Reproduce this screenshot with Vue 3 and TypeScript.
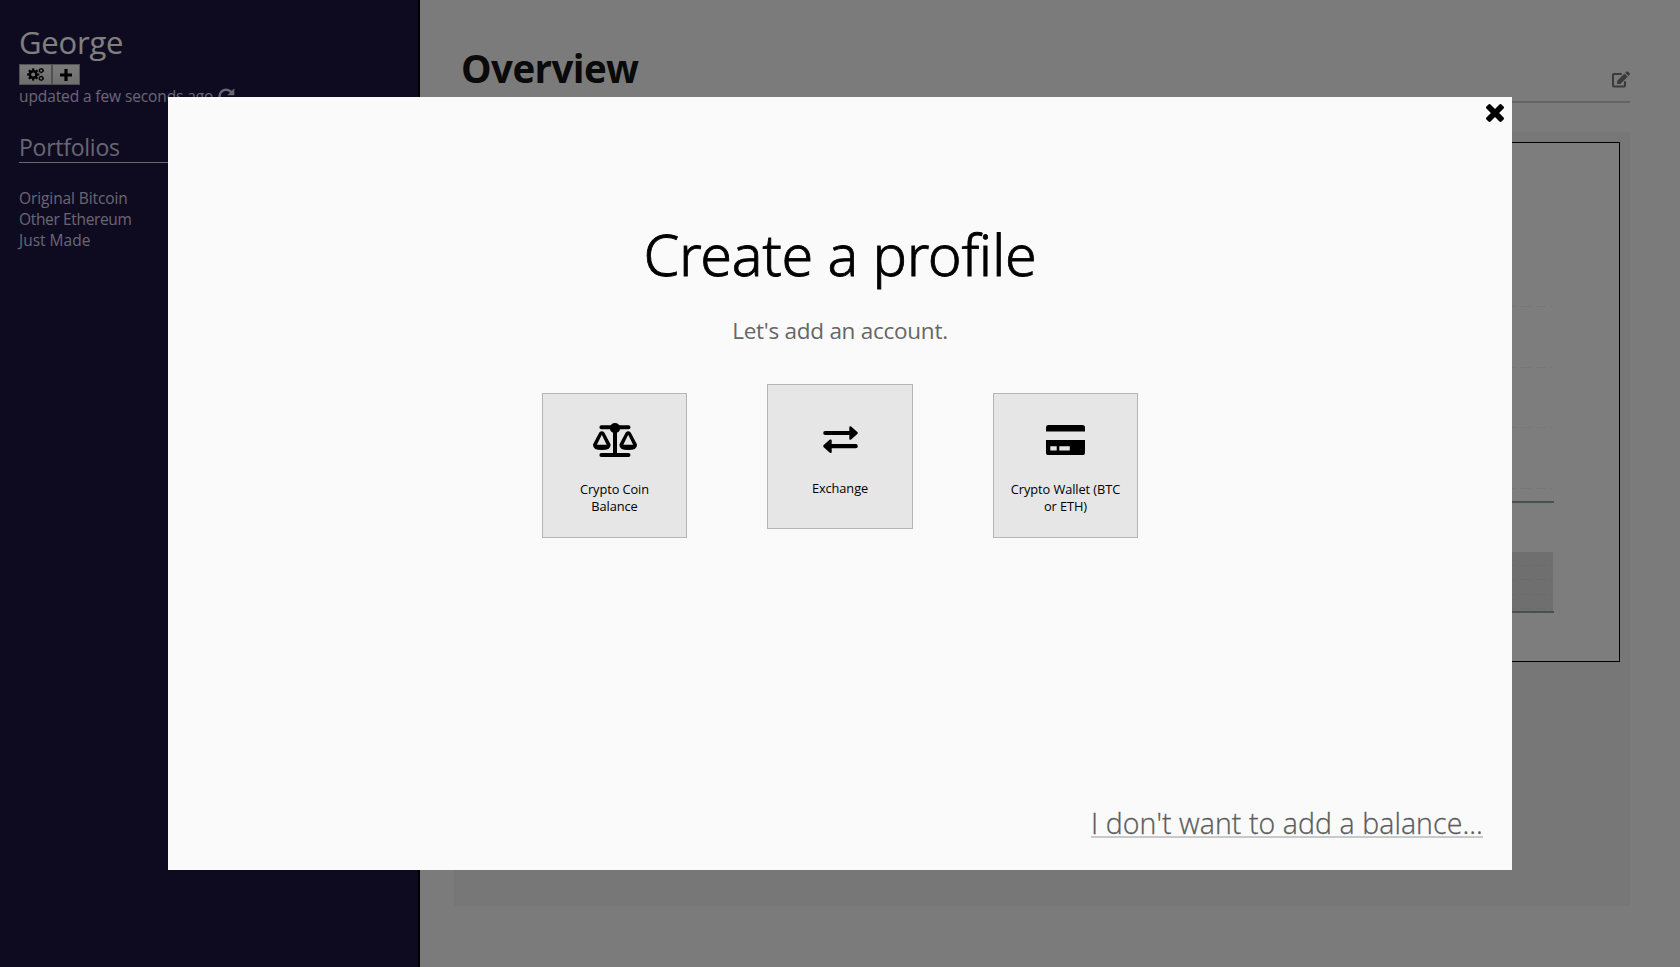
<script setup lang="ts">
type AccountKind = 'balance' | 'exchange' | 'wallet'

const portfolios: string[] = ['Original Bitcoin', 'Other Ethereum', 'Just Made']
const accounts: { kind: AccountKind; label: string }[] = [
  { kind: 'balance', label: 'Crypto Coin Balance' },
  { kind: 'exchange', label: 'Exchange' },
  { kind: 'wallet', label: 'Crypto Wallet (BTC or ETH)' },
]
const gridLines: number[] = [306.5, 367.5, 427.5, 488.5]
const brushLines: number[] = [565.5, 579.5, 594.5, 608.5]
const bigTeeth: number[] = [0, 45, 90, 135, 180, 225, 270, 315]
</script>

<template>
  <div class="app">
    <aside class="sidebar">
      <h2 class="user">George</h2>
      <div class="buttons">
        <button class="btn settings" aria-label="Settings">
          <svg width="17" height="13" viewBox="0 0 17 13">
            <g fill="none" stroke="#000">
              <circle cx="6.2" cy="6.5" r="3.3" stroke-width="2.5" />
              <path v-for="a in bigTeeth" :key="a" d="M6.2 .4v2" stroke-width="2.2" :transform="`rotate(${a} 6.2 6.5)`" />
              <circle cx="14.2" cy="2.6" r="1.8" stroke-width="1.3" />
              <circle cx="14.2" cy="2.6" r="2.4" stroke-width=".8" stroke-dasharray="1.2 1.3" />
              <circle cx="14.2" cy="10.4" r="1.8" stroke-width="1.3" />
              <circle cx="14.2" cy="10.4" r="2.4" stroke-width=".8" stroke-dasharray="1.2 1.3" />
            </g>
          </svg>
        </button>
        <button class="btn add" aria-label="Add">
          <svg width="12" height="12" viewBox="0 0 12 12">
            <path d="M6 1.6v8.8M1.6 6h8.8" stroke="#000" stroke-width="3.2" stroke-linecap="square" fill="none" />
          </svg>
        </button>
      </div>
      <div class="updated">
        <span>updated a few seconds ago</span>
        <svg width="17" height="17" viewBox="0 0 17 17">
          <path d="M14.1 5.2A6.7 6.7 0 1 0 14.4 11" fill="none" stroke="currentColor" stroke-width="2.4" />
          <path d="M16.3 .3v7H9.3z" fill="currentColor" />
        </svg>
      </div>
      <h3 class="section">Portfolios</h3>
      <ul class="list">
        <li v-for="name in portfolios" :key="name">{{ name }}</li>
      </ul>
    </aside>

    <main class="main">
      <header class="header">
        <h1>Overview</h1>
        <svg class="edit" width="18" height="17" viewBox="0 0 18 17">
          <path d="M9.8 3H1.9Q1 3 1 3.9V14.6Q1 15.5 1.9 15.5H12.1Q13 15.5 13 14.6V10.2" fill="none" stroke="currentColor" stroke-width="2" />
          <path d="M5.2 9.8 12.5 2.5 15.7 5.7 8.4 13H5.2z" fill="currentColor" />
          <path d="M13.3 1.7 14.6.4Q15.2-.1 15.8.4L17.7 2.3Q18.2 2.9 17.7 3.5L16.5 4.9z" fill="currentColor" />
        </svg>
      </header>
      <section class="panel">
        <div class="chart">
          <svg width="1154" height="518" viewBox="465 143 1154 518">
            <rect x="530" y="552" width="1023" height="60" fill="#dedede" />
            <g stroke="#ededed" stroke-dasharray="10 5">
              <path v-for="y in gridLines" :key="y" :d="`M531 ${y}H1553`" />
            </g>
            <g stroke="#d6d6d6" stroke-dasharray="10 5">
              <path v-for="y in brushLines" :key="y" :d="`M531 ${y}H1553`" />
            </g>
            <path d="M530 502H1554M530 612H1554" stroke="#8ea6a6" stroke-width="2" />
          </svg>
        </div>
      </section>
    </main>

    <div class="overlay">
      <div class="modal" role="dialog">
        <button class="close" aria-label="Close">
          <svg width="18" height="18" viewBox="302 366 1188 1188">
            <path d="M1490 1322q0 40-28 68l-136 136q-28 28-68 28t-68-28l-294-294-294 294q-28 28-68 28t-68-28l-136-136q-28-28-28-68t28-68l294-294-294-294q-28-28-28-68t28-68l136-136q28-28 68-28t68 28l294 294 294-294q28-28 68-28t68 28l136 136q28 28 28 68t-28 68l-294 294 294 294q28 28 28 68z" />
          </svg>
        </button>
        <h1 class="title">Create a profile</h1>
        <p class="subtitle">Let's add an account.</p>
        <div class="cards">
          <button v-for="account in accounts" :key="account.kind" class="card" :class="account.kind">
            <span class="icon">
              <svg v-if="account.kind === 'balance'" width="44" height="34" viewBox="0 0 44 34">
                <g fill="none" stroke="#000" stroke-width="4" stroke-linecap="round">
                  <path d="M8.4 4.2H35.5M8.4 31.9H35.5" />
                  <path d="M22 4V31" stroke-linecap="butt" />
                </g>
                <circle cx="22" cy="5.2" r="5.1" />
                <path d="M6.3 9.6Q8.8 6.9 11.3 9.6L17.5 21.3Q18.3 27 8.8 27T.1 21.3zM8.8 11.8 3.9 21.7H13.7z" fill-rule="evenodd" />
                <path d="M32.7 9.6Q35.2 6.9 37.7 9.6L43.9 21.3Q44.7 27 35.2 27T26.5 21.3zM35.2 11.8 30.3 21.7H40.1z" fill-rule="evenodd" />
              </svg>
              <svg v-else-if="account.kind === 'exchange'" class="arrows" width="35" height="28" viewBox="0 0 35 28">
                <path d="M2.3 7H27M32.7 20.2H8" stroke="#000" stroke-width="4.2" stroke-linecap="round" />
                <path d="M26.3 1.3Q26.3-.3 28.1.4L34.3 5.9Q35.3 7 34.3 8.1L28.1 13.6Q26.3 14.3 26.3 12.7zM8.7 14.5Q8.7 12.9 6.9 13.6L.7 19.1Q-.3 20.2.7 21.3L6.9 26.8Q8.7 27.5 8.7 25.9z" />
              </svg>
              <svg v-else width="39" height="30" viewBox="0 0 39 30">
                <path d="M0 6.5V2.6Q0 0 2.6 0H36.4Q39 0 39 2.6V6.5zM0 15H39V27.4Q39 30 36.4 30H2.6Q0 30 0 27.4zM4.3 21.2V25.6H10.7V21.2zM13.3 21.2V25.6H23.8V21.2z" fill-rule="evenodd" />
              </svg>
            </span>
            <span class="label">{{ account.label }}</span>
          </button>
        </div>
        <a class="skip">I don't want to add a balance...</a>
      </div>
    </div>
  </div>
</template>

<style>
body {
  margin: 0;
  overflow: hidden;
}
</style>

<style scoped>
.app {
  display: flex;
  position: relative;
  width: 100%;
  height: 967px;
  overflow: hidden;
  background: #f6f6f6;
  font-family: "Open Sans", "Noto Sans", sans-serif;
}
h1, h2, h3, p, ul {
  margin: 0;
  padding: 0;
  font-weight: 400;
}
button {
  font: inherit;
  margin: 0;
  padding: 0;
  color: #000;
}
svg {
  display: block;
  flex: none;
}
.sidebar {
  box-sizing: border-box;
  width: 420px;
  flex: none;
  padding: 22px 19px 0;
  border-right: 2px solid #000;
  background: #1d1541;
  color: #d3cce2;
  font-size: 15.5px;
}
.user {
  color: #fff;
  font-size: 31px;
  line-height: 40px;
  letter-spacing: -0.2px;
}
.buttons {
  display: flex;
  margin-top: 2px;
}
.btn {
  box-sizing: border-box;
  height: 21px;
  display: flex;
  align-items: center;
  justify-content: center;
  border: 1px solid #a2a2a2;
  border-radius: 0;
  background: linear-gradient(#f7f7f7, #dddddd);
}
.settings { width: 33px; }
.add { width: 28px; }
.updated {
  display: flex;
  height: 21px;
  line-height: 23px;
  letter-spacing: -0.11px;
  white-space: nowrap;
}
.updated svg {
  margin: 3px 0 0 5px;
}
.section {
  box-sizing: border-box;
  height: 32px;
  margin-top: 25px;
  border-bottom: 1px solid #d3cce2;
  font-size: 23px;
  line-height: 33px;
  letter-spacing: -0.26px;
}
.list {
  margin-top: 25px;
  list-style: none;
  line-height: 21px;
  letter-spacing: -0.1px;
}
.list li:nth-child(2) { letter-spacing: -0.35px; }
.list li:nth-child(3) { letter-spacing: 0; }
.main {
  flex: 1;
  padding: 41px 50px 0 34px;
}
.header {
  display: flex;
  justify-content: space-between;
  height: 60px;
  padding-left: 7px;
  border-bottom: 2px solid #c8c8c8;
}
.header h1 {
  font-size: 38.5px;
  font-weight: 700;
  line-height: 54px;
  letter-spacing: -0.58px;
  color: #141414;
}
.edit {
  margin-top: 30px;
  color: #757575;
}
.panel {
  box-sizing: border-box;
  height: 774px;
  margin-top: 29px;
  padding: 10px;
  background: #efefef;
}
.chart {
  border: 1px solid #000;
  background: #fafafa;
}
.overlay {
  position: absolute;
  inset: 0;
  display: flex;
  align-items: center;
  justify-content: center;
  background: rgba(0, 0, 0, 0.5);
}
.modal {
  position: relative;
  box-sizing: border-box;
  width: 1344px;
  height: 773px;
  padding: 117px 29px 32px;
  display: flex;
  flex-direction: column;
  align-items: center;
  background: #fafafa;
}
.close {
  position: absolute;
  top: 7px;
  right: 8px;
  border: 0;
  background: none;
}
.title {
  font-family: "Noto Sans", sans-serif;
  font-size: 57.5px;
  font-weight: 300;
  line-height: 80px;
  letter-spacing: -0.33px;
  -webkit-text-stroke: 0.8px #000;
}
.subtitle {
  margin-top: 21px;
  font-size: 22.5px;
  line-height: 32px;
  letter-spacing: -0.26px;
  color: #666;
}
.cards {
  display: grid;
  grid-template-columns: 145px 146px 145px;
  gap: 80px;
  margin-top: 37px;
}
.card {
  box-sizing: border-box;
  height: 145px;
  margin-top: 9px;
  padding: 29px 14px 0;
  display: flex;
  flex-direction: column;
  align-items: center;
  border: 1px solid #b5b5b5;
  background: #e6e6e6;
}
.card.exchange {
  margin-top: 0;
  padding-top: 37px;
}
.arrows {
  margin-top: 2px;
}
.icon {
  height: 34px;
  display: flex;
  align-items: center;
}
.label {
  margin-top: 24px;
  font-size: 12.8px;
  line-height: 17px;
  letter-spacing: -0.08px;
  text-align: center;
}
.skip {
  box-sizing: border-box;
  height: 29px;
  margin-top: auto;
  align-self: flex-end;
  border-bottom: 2px solid #c9c9c9;
  font-size: 28.5px;
  font-weight: 300;
  line-height: 29px;
  letter-spacing: 0.08px;
  -webkit-text-stroke: 0.3px #5c5c5c;
  color: #5c5c5c;
}
</style>
